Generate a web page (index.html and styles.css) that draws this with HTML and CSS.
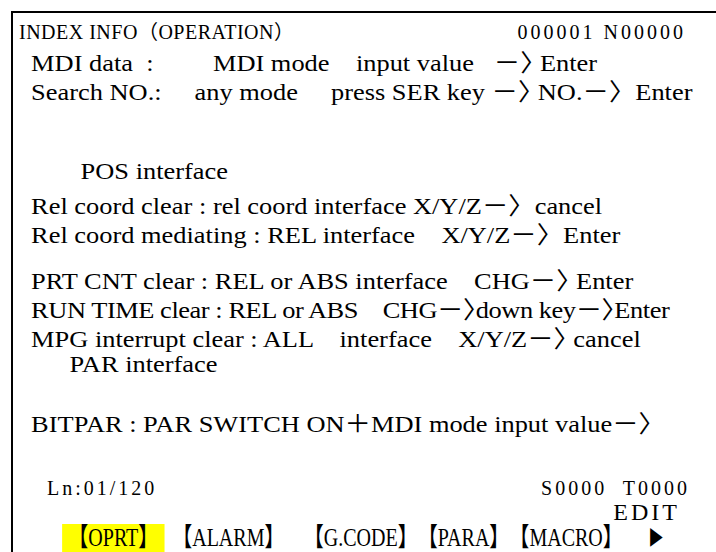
FILE: index.html
```html
<html>
<head>
  <title>Index info</title>
  <link rel="stylesheet" href="styles.css">
</head>
<body>
  <div class="screen">
    <div class="head">
      <span class="mono title">INDEX INFO（OPERATION）</span>
      <span class="mono">000001 N00000</span>
    </div>

    <div class="text">
      <div class="line">MDI data  :         MDI mode    input value   －〉 Enter</div>
      <div class="line">Search NO.:     any mode     press SER key －〉 NO.－〉  Enter</div>
      <div class="line pos">POS interface</div>
      <div class="line rel">Rel coord clear : rel coord interface X/Y/Z－〉  cancel</div>
      <div class="line">Rel coord mediating : REL interface    X/Y/Z－〉  Enter</div>
      <div class="line prt">PRT CNT clear : REL or ABS interface    CHG－〉 Enter</div>
      <div class="line tight">RUN TIME clear : REL or ABS    CHG－〉down key－〉Enter</div>
      <div class="line">MPG interrupt clear : ALL    interface    X/Y/Z－〉 cancel</div>
      <div class="line par">PAR interface</div>
      <div class="line bit">BITPAR : PAR SWITCH ON＋MDI mode input value－〉</div>
    </div>

    <div class="status">
      <span class="mono">Ln:01/120</span>
      <span class="mono">S0000  T0000</span>
    </div>
    <div class="mode mono">EDIT</div>
    <div class="keys">
      <span class="key on">【OPRT】</span>
      <span class="key alarm">【ALARM】</span>
      <span class="key gcode">【G.CODE】</span>
      <span class="key">【PARA】</span>
      <span class="key">【MACRO】</span>
      <span class="key arrow">▶</span>
    </div>
  </div>
</body>
</html>
```

FILE: styles.css
```css
body {
  margin: 0;
  padding: 0;
  background-color: white;
  color: black;
  overflow: hidden;
}

.screen {
  margin: 11px 0 0 11px;
  height: 541px;
  border-top: 2px solid black;
  border-left: 2px solid black;
  padding: 7px 30px 0 6px;
  box-sizing: border-box;
  overflow: hidden;
}

/* the LCD font: thin serif with even spacing */
.mono {
  font-family: "Liberation Serif", "Noto Sans CJK SC", serif;
  font-size: 20px;
  line-height: 24px;
  letter-spacing: 3px;
  white-space: pre;
}

.head {
  display: flex;
  justify-content: space-between;
}

.head .title {
  letter-spacing: 0.5px;
}

/* printed manual text, a little wider than plain Times */
.text {
  width: 620px;
  margin-top: 5px;
  padding-left: 11px;
  box-sizing: border-box;
  font-family: "Liberation Serif", "Noto Sans CJK SC", serif;
  font-size: 24px;
  font-feature-settings: "halt";
  transform: scaleX(1.1);
  transform-origin: left top;
}

.line {
  height: 29px;
  line-height: 29px;
  white-space: pre;
}

.pos {
  margin-top: 50px;
  padding-left: 45px;
}

.rel {
  margin-top: 6px;
}

.prt {
  margin-top: 17px;
}

.tight {
  letter-spacing: -0.4px;
}

.par {
  margin-top: -4px;
  padding-left: 35px;
}

.bit {
  margin-top: 31px;
}

.status {
  display: flex;
  justify-content: space-between;
  margin: 37px -4px 0 0;
  padding-left: 28px;
}

.mode {
  text-align: right;
  font-size: 24px;
  line-height: 24px;
  padding-right: 6px;
}

/* soft keys: tall narrow glyphs */
.keys {
  display: flex;
  align-items: center;
  padding-left: 56px;
  font-family: "Liberation Serif", "Noto Sans CJK SC", serif;
  font-size: 26px;
  line-height: 28px;
  white-space: pre;
  transform: scaleX(0.77);
  transform-origin: left center;
}

.key.on {
  padding: 0 8px;
  background-color: #ffff00;
}

.alarm {
  margin-left: 10px;
}

.gcode {
  margin-left: 25px;
}

.arrow {
  margin-left: 33px;
  font-size: 20px;
}
```
